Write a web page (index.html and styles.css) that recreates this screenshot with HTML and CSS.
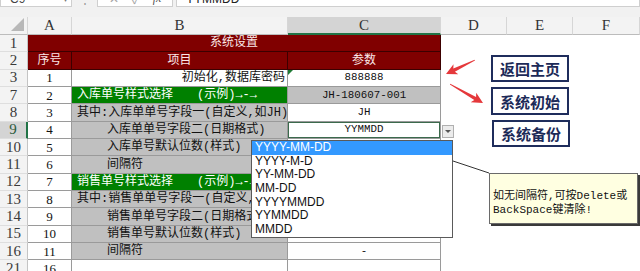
FILE: index.html
```html
<!DOCTYPE html>
<html lang="zh-CN">
<head>
<meta charset="utf-8">
<title>系统设置</title>
<link rel="stylesheet" href="styles.css">
</head>
<body>
<div class="app">
  <div class="fbar-clip">
    <div class="fbar">
      <div class="namebox"><span>C9</span><span class="nb-arrow">▾</span></div>
      <div class="fsep">⋮</div>
      <div class="fbtns"><span class="fb">✕</span><span class="fb">✓</span><span class="fx">fx</span></div>
      <div class="finput">YYMMDD</div>
    </div>
  </div>
  <div class="sheet">
    <div class="ch corner"></div>
    <div class="ch">A</div>
    <div class="ch">B</div>
    <div class="ch chsel">C</div>
    <div class="ch">D</div>
    <div class="ch">E</div>
    <div class="ch">F</div>

    <div class="c rh">1</div>
    <div class="c red ctr span3">系统设置</div>
    <div class="blank"></div>

    <div class="c rh">2</div>
    <div class="c red ctr">序号</div>
    <div class="c red ctr">项目</div>
    <div class="c red ctr">参数</div>
    <div class="blank"></div>

    <div class="c rh">3</div>
    <div class="c num ctr">1</div>
    <div class="c rgt">初始化,数据库密码</div>
    <div class="c val ctr tri">888888</div>
    <div class="blank"></div>

    <div class="c rh">7</div>
    <div class="c num ctr">2</div>
    <div class="c grn lft">入库单号样式选择<span class="ex">(示例)→-→</span></div>
    <div class="c gry val ctr">JH-180607-001</div>
    <div class="blank"></div>

    <div class="c rh">8</div>
    <div class="c num ctr">3</div>
    <div class="c gry lft">其中:入库单单号字段一(自定义,如JH)</div>
    <div class="c val ctr">JH</div>
    <div class="blank"></div>

    <div class="c rh rhsel">9</div>
    <div class="c num ctr">4</div>
    <div class="c gry ind">入库单单号字段二(日期格式)</div>
    <div class="c val ctr sel">YYMMDD</div>
    <div class="blank"></div>

    <div class="c rh">10</div>
    <div class="c num ctr">5</div>
    <div class="c gry ind">入库单号默认位数(样式)</div>
    <div class="c val ctr">000</div>
    <div class="blank"></div>

    <div class="c rh">11</div>
    <div class="c num ctr">6</div>
    <div class="c gry ind">间隔符</div>
    <div class="c val ctr">-</div>
    <div class="blank"></div>

    <div class="c rh">12</div>
    <div class="c num ctr">7</div>
    <div class="c grn lft">销售单号样式选择<span class="ex">(示例)→-→</span></div>
    <div class="c gry val ctr">XS-180607-001</div>
    <div class="blank"></div>

    <div class="c rh">13</div>
    <div class="c num ctr">8</div>
    <div class="c gry lft">其中:销售单单号字段一(自定义,如XS)</div>
    <div class="c val ctr">XS</div>
    <div class="blank"></div>

    <div class="c rh">14</div>
    <div class="c num ctr">9</div>
    <div class="c gry ind">销售单单号字段二(日期格式)</div>
    <div class="c val ctr">YYMMDD</div>
    <div class="blank"></div>

    <div class="c rh">15</div>
    <div class="c num ctr">10</div>
    <div class="c gry ind">销售单号默认位数(样式)</div>
    <div class="c val ctr">000</div>
    <div class="blank"></div>

    <div class="c rh">16</div>
    <div class="c num ctr">11</div>
    <div class="c gry ind">间隔符</div>
    <div class="c val ctr">-</div>
    <div class="blank"></div>

    <div class="c rh">21</div>
    <div class="c num ctr">16</div>
    <div class="c"></div>
    <div class="c"></div>
    <div class="blank"></div>

    <svg class="arrows" width="50" height="52" viewBox="0 0 50 52">
      <g transform="translate(6,19) rotate(-25.8)"><polygon points="0,0 11,-5.5 9,-1.8 32,-0.4 32,0.4 9,1.8 11,5.5"/></g>
      <g transform="translate(43,48) rotate(-150.1)"><polygon points="0,0 11,-5.5 9,-1.8 38,-0.4 38,0.4 9,1.8 11,5.5"/></g>
    </svg>

    <div class="btn b1">返回主页</div>
    <div class="btn b2">系统初始</div>
    <div class="btn b3">系统备份</div>

    <div class="ddbtn"><span class="ddtri"></span></div>

    <svg class="conn" width="42" height="20" viewBox="0 0 42 20"><line x1="3" y1="4" x2="39" y2="16"/></svg>

    <div class="ddlist">
      <div class="opt on">YYYY-MM-DD</div>
      <div class="opt">YYYY-M-D</div>
      <div class="opt">YY-MM-DD</div>
      <div class="opt">MM-DD</div>
      <div class="opt">YYYYMMDD</div>
      <div class="opt">YYMMDD</div>
      <div class="opt">MMDD</div>
    </div>

    <div class="note">如无间隔符,可按Delete或<br>BackSpace键清除!</div>
  </div>
</div>
</body>
</html>
```

FILE: styles.css
```css
* { box-sizing: border-box; margin: 0; padding: 0; }
html, body { width: 640px; height: 271px; overflow: hidden; background: #fff; }
body {
  font-family: "Liberation Mono", "Noto Sans CJK SC", monospace;
  font-size: 12px;
  color: #111;
}
.app { display: flex; flex-direction: column; width: 640px; height: 271px; }

/* formula bar (cut at top) */
.fbar-clip {
  height: 17px; flex: none; overflow: hidden;
  background: #f1f1f1;
}
.fbar {
  height: 26px; margin-top: -10px; padding-bottom: 9px;
  display: flex; align-items: stretch;
  font-family: "Liberation Sans", sans-serif; font-size: 12px; color: #444;
}
.namebox {
  width: 72px; background: #fff; border: 1px solid #cfcfcf;
  display: flex; align-items: center; justify-content: space-between;
  padding: 0 3px 0 9px;
}
.nb-arrow { color: #777; font-size: 10px; }
.fsep { width: 25px; display: flex; align-items: center; justify-content: center; color: #999; }
.fbtns {
  width: 76px; background: #fff; border: 1px solid #cfcfcf;
  display: flex; align-items: center; justify-content: space-around; padding: 0 4px;
}
.fb { color: #a5a5a5; }
.fx { font-style: italic; color: #555; font-family: "Liberation Serif", serif; }
.finput {
  flex: 1; margin-left: 3px; background: #fff; border: 1px solid #cfcfcf;
  display: flex; align-items: center; padding-left: 9px; color: #222;
}

/* sheet grid */
.sheet {
  position: relative;
  display: grid;
  grid-template-columns: 28px 44px 216px 153px 66px 66px 67px;
  grid-template-rows: 18px repeat(14, 17.35px);
}
.ch {
  background: #f3f3f3;
  border-right: 1px solid #d6d6d6; border-bottom: 1px solid #bcbcbc;
  display: flex; align-items: center; justify-content: center;
  font-family: "Liberation Serif", serif; font-size: 15px; color: #333;
}
.chsel { background: #d4d4d4; border-bottom: 2px solid #217346; }
.corner { position: relative; }
.corner::after {
  content: ""; position: absolute; right: 3px; bottom: 3px;
  border-style: solid; border-width: 0 0 13px 13px;
  border-color: transparent transparent #b8b8b8 transparent;
}

.c {
  display: flex; align-items: center;
  border-right: 1px solid #9a9a9a; border-bottom: 1px solid #9a9a9a;
  white-space: nowrap; overflow: hidden; background: #fff; line-height: 1;
}
.rh {
  background: #f3f3f3; justify-content: center;
  border-right: 1px solid #c4c4c4; border-bottom: 1px solid #dedede;
  font-family: "Liberation Serif", serif; font-size: 15px; color: #3a3a3a;
}
.rhsel { background: #d4d4d4; border-right: 2px solid #217346; color: #2a5a3c; }
.span3 { grid-column: span 3; }
.blank { grid-column: span 3; background: #fff; }
.ctr { justify-content: center; }
.rgt { justify-content: flex-end; padding-right: 2px; }
.lft { padding-left: 5px; }
.ind { padding-left: 35px; }
.red { background: #800000; color: #fbe8e8; border-color: #3c0000; }
.grn { background: #008000; color: #fff; }
.gry { background: #c0c0c0; }
.num { font-family: "Liberation Serif", serif; font-size: 13px; }
.val { font-size: 10.8px; }
.ex { margin-left: 24px; }
.sel { box-shadow: inset 0 0 0 1px #3b6a4c; }
.tri { position: relative; }
.tri::before {
  content: ""; position: absolute; left: 0; top: 0;
  border-style: solid; border-width: 5px 5px 0 0;
  border-color: #1e7b34 transparent transparent transparent;
}

/* overlays */
.arrows { position: absolute; left: 440px; top: 38px; }
.arrows polygon { fill: #e5383b; }

.btn {
  position: absolute; width: 78px; height: 27px;
  border: 2px solid #1f2d5c; background: #fff;
  display: flex; align-items: center; justify-content: center;
  font-family: "Noto Sans CJK SC", sans-serif; font-weight: 700; font-size: 15px;
  color: #1c2a58;
}
.b1 { left: 491px; top: 38px; }
.b2 { left: 491px; top: 70px; height: 28px; }
.b3 { left: 492px; top: 103px; }

.ddbtn {
  position: absolute; left: 442px; top: 108px; width: 12px; height: 13px;
  background: #ececec; border: 1px solid #b0b0b0;
  display: flex; align-items: center; justify-content: center;
}
.ddtri {
  border-style: solid; border-width: 3px 3px 0 3px;
  border-color: #555 transparent transparent transparent;
}

.conn { position: absolute; left: 450px; top: 140px; }
.conn line { stroke: #333; stroke-width: 1; }

.ddlist {
  position: absolute; left: 251px; top: 123px; width: 202px; height: 98px;
  background: #fff; border: 1px solid #5a5a5a;
  display: flex; flex-direction: column;
  font-family: "Liberation Sans", sans-serif; font-size: 12px; color: #111;
}
.opt { height: 13.7px; line-height: 13.7px; padding-left: 3px; }
.opt.on { background: #3399ff; color: #fff; }

.note {
  position: absolute; left: 489px; top: 156px; width: 149px; height: 51px;
  background: #ffffe1; border: 1px solid #6a6a6a;
  box-shadow: 2px 2px 0 #3a3a3a;
  padding: 15px 0 0 3px;
  font-size: 11px; line-height: 14px; color: #111;
  white-space: nowrap;
}
```
